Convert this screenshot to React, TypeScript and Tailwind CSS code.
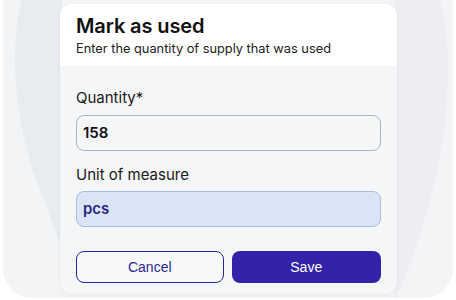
import React from "react";

function Backdrop() {
  return (
    <svg
      className="absolute inset-0"
      width="456"
      height="300"
      viewBox="0 0 456 300"
      aria-hidden="true"
    >
      <rect x="0" y="0" width="456" height="300" fill="#ffffff" />
      <rect x="3" y="-30" width="450" height="328" rx="30" fill="#f3f4f6" />
      <path
        d="M 22 0 C 10 40, 12 120, 40 190 C 52 220, 58 240, 62 250 L 62 0 Z"
        fill="#e8ecf1"
      />
      <path
        d="M 395 0 L 440 0 C 452 40, 452 120, 430 200 C 418 245, 405 280, 395 300 L 395 0 Z"
        fill="#eceef1"
      />
    </svg>
  );
}

export default function App() {
  return (
    <div
      className="relative w-[456px] h-[300px] overflow-hidden bg-white"
      style={{ fontFamily: "Inter, 'Noto Sans', sans-serif" }}
    >
      <Backdrop />
      <div className="relative ml-[60px] pt-[4px]">
        <div className="w-[337px] h-[290px] rounded-[12px] overflow-hidden bg-[#f5f6f8] shadow-[0_1px_4px_rgba(0,0,0,0.06)] flex flex-col">
          <div className="bg-white h-[62px] px-[16px] pt-[9px]">
            <div className="text-[20px] leading-[26px] font-semibold text-[#111111] tracking-[-0.1px]">
              Mark as used
            </div>
            <div className="text-[12.8px] leading-[18px] text-[#222222] mt-[1px]">
              Enter the quantity of supply that was used
            </div>
          </div>
          <div className="flex flex-col px-[16px] pt-[22px]">
            <div className="text-[15px] leading-[20px] text-[#1a1a1a]">Quantity*</div>
            <div className="mt-[7px] h-[36px] rounded-[8px] border border-[#aab3cc] bg-[#f5f6f8] flex items-center px-[6px] text-[15px] font-semibold text-[#111111]">
              158
            </div>
            <div className="mt-[14px] text-[15px] leading-[20px] text-[#1a1a1a]">Unit of measure</div>
            <div className="mt-[6px] h-[36px] rounded-[8px] border border-[#a8bde0] bg-[#d9e5f7] flex items-center px-[6px] text-[15px] font-semibold text-[#2a2585]">
              pcs
            </div>
            <div
              className="mt-[24px] flex gap-[8px]"
              style={{ fontFamily: "'Liberation Sans', Arial, sans-serif" }}
            >
              <div className="w-[148px] h-[32px] rounded-[8px] border border-[#2c2490] bg-[#f7f8fa] flex items-center justify-center text-[14px] text-[#2c2790]">
                Cancel
              </div>
              <div className="w-[150px] h-[32px] rounded-[8px] bg-[#3223a8] flex items-center justify-center text-[14px] text-white">
                Save
              </div>
            </div>
          </div>
        </div>
      </div>
    </div>
  );
}
